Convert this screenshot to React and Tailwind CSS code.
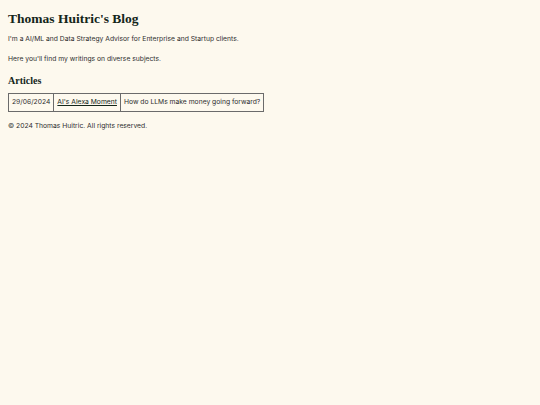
export default function App() {
  return (
    <div className="min-h-[405px] bg-[#fdf9ee] px-2 pt-[10px] text-[6.75px] text-[#2e2e2e] antialiased font-['Inter',sans-serif]">
      <h1 className="text-[13.5px] font-bold leading-[18px] text-[#14261a] font-['Liberation_Serif',serif]">
        Thomas Huitric's Blog
      </h1>
      <p className="mt-[6px] leading-[10px]">
        I'm a AI/ML and Data Strategy Advisor for Enterprise and Startup clients.
      </p>
      <p className="mt-[10px] leading-[10px]">Here you'll find my writings on diverse subjects.</p>
      <h2 className="mt-[10px] text-[10px] font-bold leading-[14px] text-[#14261a] font-['Liberation_Serif',serif]">
        Articles
      </h2>
      <table className="mt-[5px] border-collapse border border-[#6b6b6b]">
        <tbody>
          <tr>
            <td className="h-[18px] border border-[#6b6b6b] px-[3px]">29/06/2024</td>
            <td className="border border-[#6b6b6b] px-[3px]">
              <a href="#" className="text-[#14261a] underline">AI's Alexa Moment</a>
            </td>
            <td className="border border-[#6b6b6b] px-[3px]">How do LLMs make money going forward?</td>
          </tr>
        </tbody>
      </table>
      <p className="mt-[9px] leading-[10px]">© 2024 Thomas Huitric. All rights reserved.</p>
    </div>
  );
}
